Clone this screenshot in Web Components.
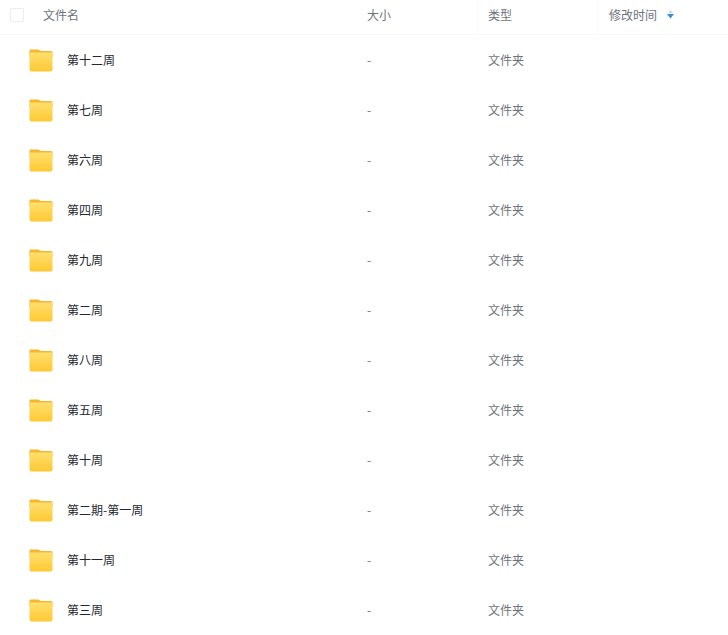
<!DOCTYPE html>
<html>
<head>
<meta charset="utf-8">
<style>
  html, body { margin: 0; background: #fff; overflow: hidden; }
  body { font-family: "Noto Sans CJK SC", "Liberation Sans", sans-serif; font-size: 12px; }
</style>
</head>
<body>
<file-table>
  <file-row name="第十二周"></file-row>
  <file-row name="第七周"></file-row>
  <file-row name="第六周"></file-row>
  <file-row name="第四周"></file-row>
  <file-row name="第九周"></file-row>
  <file-row name="第二周"></file-row>
  <file-row name="第八周"></file-row>
  <file-row name="第五周"></file-row>
  <file-row name="第十周"></file-row>
  <file-row name="第二期-第一周"></file-row>
  <file-row name="第十一周"></file-row>
  <file-row name="第三周"></file-row>
</file-table>
<script>
  class FileTable extends HTMLElement {
    constructor() {
      super();
      this.attachShadow({ mode: "open" });
    }

    connectedCallback() {
      this.shadowRoot.innerHTML = `
        <style>
          :host { display: block; width: 728px; }
          .head {
            display: grid;
            grid-template-columns: 367px 110px 120px 1fr;
            height: 34px;
            border-bottom: 1px solid #f9f9fa;
            color: #6f747c;
            line-height: 29px;
          }
          .head > div { display: flex; align-items: flex-start; height: 34px; }
          .name { padding-left: 10px; }
          .box {
            width: 12px;
            height: 12px;
            margin: 8px 19px 0 0;
            border: 1px solid #eceef0;
            border-radius: 1px;
          }
          .type { padding-left: 10px; border-left: 1px solid #fafafb; }
          .time { padding-left: 11px; border-left: 1px solid #fafafb; }
          .sort { margin: 10px 0 0 10px; }
        </style>
        <div class="head">
          <div class="name"><span class="box"></span>文件名</div>
          <div class="size">大小</div>
          <div class="type">类型</div>
          <div class="time">修改时间
            <svg class="sort" width="7" height="9" viewBox="0 0 7 9">
              <path d="M3.5 0 L6 3 H1 Z" fill="#c4d7ec"/>
              <path d="M3.5 8.5 L7 4 H0 Z" fill="#3b8cdc"/>
            </svg>
          </div>
        </div>
        <slot></slot>
      `;
    }
  }

  class FileRow extends HTMLElement {
    constructor() {
      super();
      this.attachShadow({ mode: "open" });
    }

    connectedCallback() {
      const name = this.getAttribute("name");
      this.shadowRoot.innerHTML = `
        <style>
          :host {
            display: grid;
            grid-template-columns: 367px 121px 1fr;
            align-items: center;
            height: 50px;
            line-height: 16px;
            color: #6f747c;
          }
          .name { display: flex; align-items: center; padding-left: 29px; color: #24272d; }
          svg { margin: 1px 14px 0 0; flex: none; }
        </style>
        <div class="name">
          <svg width="24" height="23" viewBox="0 0 24 23">
            <defs>
              <linearGradient id="fold" x1="0" y1="0" x2="0" y2="1">
                <stop offset="0" stop-color="#ffe06e"/>
                <stop offset="1" stop-color="#ffc832"/>
              </linearGradient>
            </defs>
            <path d="M1.5 .5 H9.5 L11.5 2 H22 a1.5 1.5 0 0 1 1.5 1.5 V8 H.5 V1.5 a1 1 0 0 1 1-1 Z" fill="#f8b62b"/>
            <path d="M.5 3.5 H23.5 V20.5 a2 2 0 0 1-2 2 H2.5 a2 2 0 0 1-2-2 Z" fill="url(#fold)"/>
          </svg>
          <span>${name}</span>
        </div>
        <div>-</div>
        <div>文件夹</div>
      `;
    }
  }

  customElements.define("file-table", FileTable);
  customElements.define("file-row", FileRow);
</script>
</body>
</html>
